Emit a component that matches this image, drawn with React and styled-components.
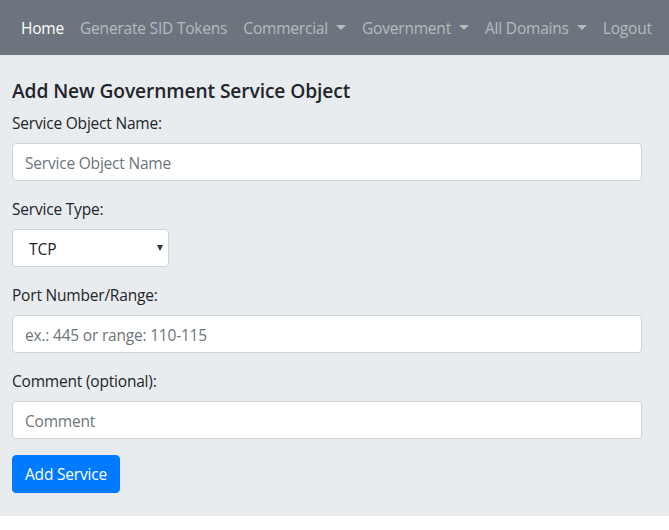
import React from 'react';
import styled, { createGlobalStyle } from 'styled-components';

const GlobalStyle = createGlobalStyle`
  html, body {
    margin: 0;
    padding: 0;
    background: #fff;
    font-family: "Open Sans", "Noto Sans", sans-serif;
    color: #212529;
  }
  * { box-sizing: border-box; }
`;

const Navbar = styled.nav`
  display: flex;
  align-items: center;
  height: 55px;
  padding: 0 11px 0 13px;
  background-color: #6c757d;
  white-space: nowrap;
`;

const NavLink = styled.a`
  display: flex;
  flex-shrink: 0;
  align-items: center;
  padding: 8px;
  font-size: 15.5px;
  line-height: 24px;
  letter-spacing: -0.2px;
  text-decoration: none;
  color: ${(p) => (p.active ? '#fff' : 'rgba(255,255,255,0.5)')};
  cursor: pointer;
`;

const Caret = styled.span`
  display: inline-block;
  margin-left: 8px;
  border-top: 5px solid currentColor;
  border-left: 5px solid transparent;
  border-right: 5px solid transparent;
`;

const Main = styled.main`
  background-color: #e9ecef;
  padding: 24px 27px 23px 12px;
`;

const Title = styled.h5`
  margin: 0 0 8px;
  font-size: 19.2px;
  font-weight: 600;
  line-height: 24px;
  letter-spacing: -0.1px;
`;

const Group = styled.div`
  margin-bottom: 16px;
`;

const Label = styled.label`
  display: block;
  margin-bottom: 8px;
  font-size: 15.5px;
  line-height: 24px;
  letter-spacing: -0.2px;
`;

const Input = styled.input`
  display: block;
  width: 100%;
  height: 38px;
  padding: 7px 12px 5px;
  font-family: inherit;
  font-size: 15.5px;
  letter-spacing: -0.2px;
  color: #495057;
  background: #fff;
  border: 1px solid #ced4da;
  border-radius: 4px;
  outline: none;
  &::placeholder { color: #6c757d; }
`;

const SelectWrap = styled.div`
  position: relative;
  width: 157px;
`;

const Select = styled.select`
  display: block;
  width: 100%;
  height: 38px;
  padding: 7px 12px 5px 16px;
  appearance: none;
  font-family: inherit;
  font-size: 15.5px;
  color: #212529;
  background: #fff;
  border: 1px solid #ced4da;
  border-radius: 4px;
  outline: none;
`;

const SelectArrow = styled.span`
  position: absolute;
  right: 6px;
  top: 16px;
  border-top: 6px solid #333;
  border-left: 3.5px solid transparent;
  border-right: 3.5px solid transparent;
  pointer-events: none;
`;

const Button = styled.button`
  height: 38px;
  padding: 6px 12px;
  font-family: inherit;
  font-size: 15.5px;
  letter-spacing: -0.2px;
  color: #fff;
  background-color: #007bff;
  border: 1px solid #007bff;
  border-radius: 4px;
  cursor: pointer;
`;

const navItems = [
  { label: 'Home', active: true },
  { label: 'Generate SID Tokens' },
  { label: 'Commercial', dropdown: true },
  { label: 'Government', dropdown: true },
  { label: 'All Domains', dropdown: true },
  { label: 'Logout' },
];

export default function App() {
  return (
    <>
      <GlobalStyle />
      <Navbar>
        {navItems.map((item) => (
          <NavLink key={item.label} active={item.active ? 1 : 0}>
            {item.label}
            {item.dropdown && <Caret />}
          </NavLink>
        ))}
      </Navbar>
      <Main>
        <Title>Add New Government Service Object</Title>
        <Group>
          <Label>Service Object Name:</Label>
          <Input placeholder="Service Object Name" />
        </Group>
        <Group>
          <Label>Service Type:</Label>
          <SelectWrap>
            <Select defaultValue="TCP">
              <option>TCP</option>
              <option>UDP</option>
            </Select>
            <SelectArrow />
          </SelectWrap>
        </Group>
        <Group>
          <Label>Port Number/Range:</Label>
          <Input placeholder="ex.: 445 or range: 110-115" />
        </Group>
        <Group>
          <Label>Comment (optional):</Label>
          <Input placeholder="Comment" />
        </Group>
        <Button>Add Service</Button>
      </Main>
    </>
  );
}
